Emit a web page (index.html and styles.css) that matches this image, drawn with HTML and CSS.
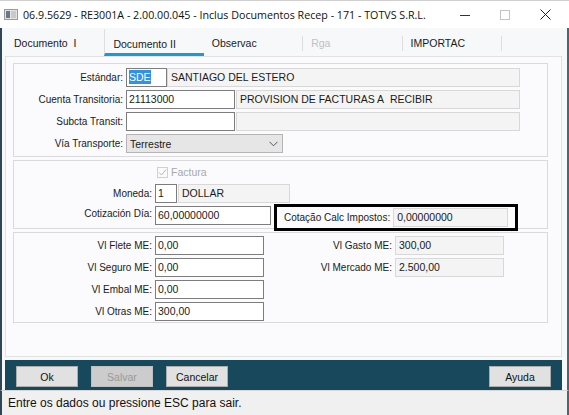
FILE: index.html
```html
<!DOCTYPE html>
<html lang="pt">
<head>
  <meta charset="UTF-8" />
  <title>Inclus Documentos Recep</title>
  <link rel="stylesheet" href="styles.css">
</head>
<body>
  <div class="window">
    <div class="titlebar">
      <svg class="app-icon" width="14" height="11" viewBox="0 0 14 11">
        <rect x="0.5" y="0.5" width="13" height="10" fill="#e4e4e4" stroke="#9a9a9a"/>
        <rect x="2" y="2" width="4" height="7" fill="#6a7a86"/>
        <rect x="7" y="2" width="5" height="7" fill="#c9c9c9"/>
      </svg>
      <span class="title">06.9.5629 - RE3001A - 2.00.00.045 - Inclus Documentos Recep - 171 - TOTVS S.R.L.</span>
      <div class="controls">
        <svg width="10" height="10" viewBox="0 0 10 10"><line x1="0" y1="5.5" x2="10" y2="5.5" stroke="#333" stroke-width="1"/></svg>
        <svg width="10" height="10" viewBox="0 0 10 10"><rect x="0.5" y="0.5" width="9" height="9" fill="none" stroke="#c4c4c4"/></svg>
        <svg width="11" height="11" viewBox="0 0 11 11"><path d="M0.5 0.5 L10.5 10.5 M10.5 0.5 L0.5 10.5" stroke="#222" stroke-width="1"/></svg>
      </div>
    </div>

    <div class="client">
      <div class="tabs">
        <div class="tab">Documento&nbsp; I</div>
        <div class="tab active">Documento II</div>
        <div class="tab">Observac</div>
        <div class="tab disabled">Rga</div>
        <div class="tab">IMPORTAC</div>
      </div>

      <div class="panel">
        <div class="group g1">
          <div class="row">
            <label>Estándar:</label>
            <div class="field w40"><span class="selected">SDE</span></div>
            <div class="field ro desc1">SANTIAGO DEL ESTERO</div>
          </div>
          <div class="row">
            <label>Cuenta Transitoria:</label>
            <div class="field w109">21113000</div>
            <div class="field ro desc2">PROVISION DE FACTURAS A&nbsp; RECIBIR</div>
          </div>
          <div class="row">
            <label>Subcta Transit:</label>
            <div class="field w109"></div>
            <div class="field ro desc2"></div>
          </div>
          <div class="row">
            <label>Vía Transporte:</label>
            <div class="combo">
              <span>Terrestre</span>
              <svg width="9" height="6" viewBox="0 0 9 6"><path d="M0.5 0.8 L4.5 4.8 L8.5 0.8" fill="none" stroke="#555" stroke-width="1"/></svg>
            </div>
          </div>
        </div>

        <div class="group g2">
          <div class="check-row">
            <span class="checkbox">
              <svg width="9" height="9" viewBox="0 0 9 9"><path d="M1 4.5 L3.5 7 L8 1.5" fill="none" stroke="#b8b8b8" stroke-width="1"/></svg>
            </span>
            <span class="check-label">Factura</span>
          </div>
          <div class="row">
            <label>Moneda:</label>
            <div class="field w22">1</div>
            <div class="field ro w112">DOLLAR</div>
          </div>
          <div class="row cot-row">
            <label>Cotización Día:</label>
            <div class="field w116">60,00000000</div>
            <div class="highlight">
              <span class="hl-label">Cotação Calc Impostos:</span>
              <div class="field ro w115">0,00000000</div>
            </div>
          </div>
        </div>

        <div class="group g3">
          <div class="col left-col">
            <div class="row">
              <label>Vl Flete ME:</label>
              <div class="field w109">0,00</div>
            </div>
            <div class="row">
              <label>Vl Seguro ME:</label>
              <div class="field w109">0,00</div>
            </div>
            <div class="row">
              <label>Vl Embal ME:</label>
              <div class="field w109">0,00</div>
            </div>
            <div class="row">
              <label>Vl Otras ME:</label>
              <div class="field w109">300,00</div>
            </div>
          </div>
          <div class="col right-col">
            <div class="row">
              <label>Vl Gasto ME:</label>
              <div class="field ro w109">300,00</div>
            </div>
            <div class="row">
              <label>Vl Mercado ME:</label>
              <div class="field ro w109">2.500,00</div>
            </div>
          </div>
        </div>
      </div>

      <div class="buttonbar">
        <button class="btn">Ok</button>
        <button class="btn" disabled>Salvar</button>
        <button class="btn">Cancelar</button>
        <div class="spacer"></div>
        <button class="btn">Ayuda</button>
      </div>
    </div>

    <div class="statusbar">Entre os dados ou pressione ESC para sair.</div>
  </div>
</body>
</html>
```

FILE: styles.css
```css
html, body {
  margin: 0;
  padding: 0;
}

body {
  width: 569px;
  height: 415px;
  overflow: hidden;
  background: #ffffff;
  font-family: 'Liberation Sans', Arial, sans-serif;
  color: #1a1a1a;
}

.window {
  width: 569px;
  height: 415px;
  display: flex;
  flex-direction: column;
  box-sizing: border-box;
}

/* title bar */

.titlebar {
  height: 28px;
  flex: none;
  display: flex;
  align-items: center;
  background: #ffffff;
  border-top: 1px solid #d0d0d0;
  box-sizing: border-box;
  padding-left: 4px;
}

.app-icon {
  margin-right: 5px;
}

.title {
  font-family: 'Open Sans', 'Liberation Sans', sans-serif;
  font-size: 10.7px;
  color: #111;
  white-space: nowrap;
}

.controls {
  margin-left: auto;
  display: flex;
  align-items: center;
  gap: 30px;
  padding-right: 18px;
}

/* client area */

.client {
  flex: 1;
  display: flex;
  flex-direction: column;
  background: #f7f8fa;
  border-left: 2px solid #2f4656;
  border-right: 2px solid #55636d;
  padding: 0 5px 0 3px;
}

.tabs {
  height: 28px;
  flex: none;
  display: flex;
  align-items: center;
}

.tab {
  width: 99.4px;
  height: 28px;
  box-sizing: border-box;
  padding: 9px 0 0 9px;
  font-size: 10.5px;
  color: #1a1a1a;
  position: relative;
}

.tab + .tab {
  padding-left: 8px;
}

.tab::after {
  content: "";
  position: absolute;
  right: 0;
  top: 8px;
  height: 15px;
  border-right: 1px solid #dedede;
}

.tab:first-child::after {
  display: none;
}

.tab.active {
  border-left: 1px solid #dedede;
  border-bottom: 3px solid #1a9ad6;
  height: 27px;
  margin-top: 1px;
}

.tab.active::after {
  display: none;
}

.tab.disabled {
  color: #c0c0c0;
}

.panel {
  height: 301px;
  flex: none;
  box-sizing: border-box;
  background: #fbfbfd;
  border: 1px solid #e2e2e2;
  padding: 6px 0 0 7px;
  display: flex;
  flex-direction: column;
  gap: 3px;
}

.group {
  width: 535px;
  box-sizing: border-box;
  border: 1px solid #dadada;
  background: #fbfbfd;
}

.row {
  display: flex;
  align-items: center;
  height: 19px;
}

.row label {
  text-align: right;
  font-size: 10px;
  padding-right: 3px;
  white-space: nowrap;
}

.field {
  height: 19px;
  box-sizing: border-box;
  border: 1px solid #7d7d7d;
  background: #ffffff;
  font-size: 10.5px;
  line-height: 17px;
  padding-left: 2px;
  white-space: nowrap;
  overflow: hidden;
}

.field.ro {
  border-color: #d8d8d8;
  background: #f4f4f5;
  padding-left: 3px;
}

.selected {
  background: #3390e8;
  color: #ffffff;
  padding: 1px 0;
}

.w22 { width: 22px; }
.w40 { width: 41px; }
.w109 { width: 109px; }
.w112 { width: 112px; margin-left: 1px; }
.w115 { width: 115px; }
.w116 { width: 116px; }

.desc1 {
  width: 353px;
}

.desc2 {
  width: 284px;
  margin-left: 1px;
}

/* group 1 */

.g1 {
  display: flex;
  flex-direction: column;
  gap: 3px;
  padding: 4px 0 3px;
}

.g1 label {
  width: 109px;
}

.combo {
  width: 157px;
  height: 19px;
  box-sizing: border-box;
  border: 1px solid #b4b4b4;
  background: #e6e6e6;
  display: flex;
  align-items: center;
  justify-content: space-between;
  font-size: 10.5px;
  padding: 0 4px 0 3px;
}

/* group 2 */

.g2 {
  height: 69px;
  display: flex;
  flex-direction: column;
  padding: 5px 0 0;
}

.check-row {
  display: flex;
  align-items: center;
  height: 12px;
  padding-left: 143px;
  margin-bottom: 6px;
}

.checkbox {
  width: 11px;
  height: 11px;
  box-sizing: border-box;
  border: 1px solid #d0d0d0;
  background: #fafafa;
  display: flex;
  align-items: center;
  justify-content: center;
}

.check-label {
  font-size: 10.5px;
  color: #a8a8a8;
  margin-left: 3px;
}

.g2 label {
  width: 138px;
}

.g2 .row + .row {
  margin-top: 1px;
}

.cot-row {
  align-items: flex-start;
  height: 27px;
}

.cot-row > label {
  margin-top: 4px;
}

.cot-row > .field {
  margin-top: 2px;
}

.highlight {
  margin-left: 3px;
  width: 244px;
  height: 27px;
  box-sizing: border-box;
  border: 3px solid #000000;
  display: flex;
  align-items: center;
  padding-left: 7px;
}

.hl-label {
  font-size: 10px;
  padding-right: 3px;
  white-space: nowrap;
}

/* group 3 */

.g3 {
  height: 91px;
  display: flex;
  padding-top: 3px;
}

.col {
  display: flex;
  flex-direction: column;
  gap: 3px;
}

.left-col {
  width: 250px;
}

.left-col label {
  width: 138px;
}

.right-col label {
  width: 128px;
}

/* buttons */

.buttonbar {
  margin-top: 3px;
  height: 30px;
  flex: none;
  box-sizing: border-box;
  background: #17485b;
  display: flex;
  align-items: flex-start;
  gap: 13px;
  padding: 6px 11px 0 11px;
}

.btn {
  width: 62px;
  height: 21px;
  border: 1px solid #adadad;
  background: #e1e1e1;
  font-family: 'Liberation Sans', Arial, sans-serif;
  font-size: 10.5px;
  color: #111;
  padding: 0;
}

.btn:disabled {
  background: #cccccc;
  color: #9a9a9a;
  border-color: #bfbfbf;
}

.spacer {
  flex: 1;
}

.statusbar {
  height: 26px;
  flex: none;
  box-sizing: border-box;
  background: #f0f0f0;
  border-top: 1px solid #d8d8d8;
  border-left: 2px solid #2f4656;
  border-right: 2px solid #55636d;
  font-size: 12px;
  padding: 5px 0 0 6px;
  color: #111;
}
```
